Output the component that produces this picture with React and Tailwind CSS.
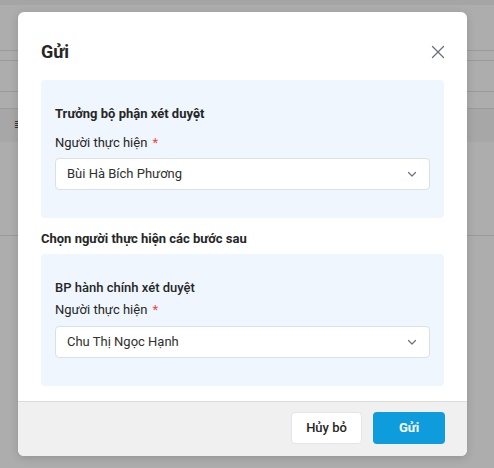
import React from "react";

function Chevron() {
  return (
    <svg width="12" height="12" viewBox="0 0 12 12" fill="none" className="text-[#6b7280]">
      <path d="M2.5 4.5 L6 8 L9.5 4.5" stroke="currentColor" strokeWidth="1.2" strokeLinecap="round" strokeLinejoin="round" />
    </svg>
  );
}

function Select({ value }) {
  return (
    <div className="flex h-[32px] items-center justify-between rounded-[4px] border border-[#dcdfe4] bg-white pl-[11px] pr-[11px]">
      <span className="text-[13px] text-[#303030]">{value}</span>
      <Chevron />
    </div>
  );
}

function Label() {
  return (
    <div className="text-[13px] leading-[20px] text-[#262626]">
      Người thực hiện <span className="ml-[2px] text-[#ef4444]">*</span>
    </div>
  );
}

export default function App() {
  return (
    <div className="relative h-[468px] w-[494px] overflow-hidden bg-[#adadad] font-['Roboto',sans-serif]">
      {/* background page (dimmed) */}
      <div className="flex flex-col">
        <div className="h-[5px] bg-[#a5a5a5]" />
        <div className="h-[45px]" />
        <div className="h-[1px] bg-[#9a9a9a]" />
        <div className="h-[9px]" />
        <div className="h-[1px] bg-[#9a9a9a]" />
        <div className="h-[30px]" />
        <div className="h-[1px] bg-[#9a9a9a]" />
        <div className="h-[16px]" />
        <div className="h-[1px] bg-[#9a9a9a]" />
        <div className="flex h-[33px] items-center bg-[#a7a7a7] pl-[14px]">
          <span className="text-[9px] leading-none text-[#333]">≣</span>
        </div>
        <div className="h-[93px]" />
        <div className="h-[1px] bg-[#9a9a9a]" />
      </div>

      {/* modal */}
      <div className="absolute left-[18px] top-[12px] flex h-[444px] w-[449px] flex-col overflow-hidden rounded-[6px] bg-white shadow-[0_2px_8px_rgba(0,0,0,0.15)]">
        <div className="flex flex-1 flex-col px-[23px] pt-[28px]">
          <div className="flex h-[24px] items-center justify-between">
            <h2 className="text-[18px] font-bold leading-[24px] text-[#262626]">Gửi</h2>
            <svg width="14" height="14" viewBox="0 0 14 14" className="mr-[-1px] text-[#6b6f7a]">
              <path d="M1.5 1.5 L12.5 12.5 M12.5 1.5 L1.5 12.5" stroke="currentColor" strokeWidth="1.3" strokeLinecap="round" />
            </svg>
          </div>

          <div className="mt-[16px] rounded-[4px] bg-[#eff6fe] px-[14px] pb-[28px] pt-[24px]">
            <div className="text-[13px] font-bold leading-[20px] text-[#262626]">Trưởng bộ phận xét duyệt</div>
            <div className="mt-[9px]"><Label /></div>
            <div className="mt-[5px]"><Select value="Bùi Hà Bích Phương" /></div>
          </div>

          <div className="mt-[11px] text-[13px] font-bold leading-[20px] text-[#262626]">Chọn người thực hiện các bước sau</div>

          <div className="mt-[5px] rounded-[4px] bg-[#eff6fe] px-[14px] pb-[28px] pt-[24px]">
            <div className="text-[13px] font-medium leading-[20px] text-[#262626]">BP hành chính xét duyệt</div>
            <div className="mt-[2px]"><Label /></div>
            <div className="mt-[6px]"><Select value="Chu Thị Ngọc Hạnh" /></div>
          </div>
        </div>

        <div className="flex h-[55px] items-start justify-end gap-[11px] border-t border-[#dcdcdc] bg-[#f0f0f0] px-[22px] pt-[10px]">
          <button className="h-[32px] w-[71px] rounded-[4px] border border-[#e1e6ee] bg-white text-[13px] font-medium text-[#262626]">Hủy bỏ</button>
          <button className="h-[32px] w-[72px] rounded-[4px] bg-[#0e9cdc] text-[13px] font-bold text-white">Gửi</button>
        </div>
      </div>
    </div>
  );
}
